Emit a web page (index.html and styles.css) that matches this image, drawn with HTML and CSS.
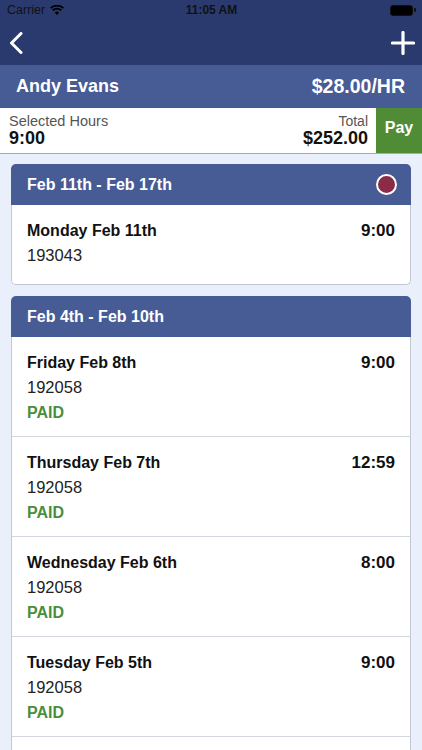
FILE: index.html
```html
<!DOCTYPE html>
<html lang="en">
<head>
<meta charset="UTF-8">
<meta name="viewport" content="width=device-width, initial-scale=1.0">
<link rel="stylesheet" href="styles.css">
<title>Andy Evans</title>
</head>
<body>

<div class="top">
  <!-- status bar -->
  <div class="status">
    <div class="status-left">
      <span>Carrier</span>
      <svg class="wifi" width="14" height="10" viewBox="0 0 14 10">
        <path d="M7 10 L4.7 7.6 A3.3 3.3 0 0 1 9.3 7.6 Z" fill="#000"/>
        <path d="M2.6 5.4 A6.3 6.3 0 0 1 11.4 5.4" fill="none" stroke="#000" stroke-width="1.8"/>
        <path d="M0.6 3.2 A9.3 9.3 0 0 1 13.4 3.2" fill="none" stroke="#000" stroke-width="1.8"/>
      </svg>
    </div>
    <div class="status-time">11:05 AM</div>
    <div class="status-right">
      <span class="battery"></span><span class="battery-nub"></span>
    </div>
  </div>

  <!-- nav bar -->
  <div class="nav">
    <svg width="14" height="22" viewBox="0 0 14 22">
      <path d="M12 1.5 L2.5 11 L12 20.5" fill="none" stroke="#fff" stroke-width="3" stroke-linecap="round" stroke-linejoin="round"/>
    </svg>
    <svg width="24" height="24" viewBox="0 0 24 24">
      <path d="M12 1.5 V22.5 M1.5 12 H22.5" stroke="#fff" stroke-width="3.2" stroke-linecap="round"/>
    </svg>
  </div>
</div>

<div class="namebar">
  <span>Andy Evans</span>
  <span class="rate">$28.00/HR</span>
</div>

<div class="summary">
  <div class="sum-col">
    <div class="sum-label">Selected Hours</div>
    <div class="sum-value">9:00</div>
  </div>
  <div class="sum-col sum-right">
    <div class="sum-label">Total</div>
    <div class="sum-value">$252.00</div>
  </div>
  <button class="pay">Pay</button>
</div>

<div class="list">

  <div class="card">
    <div class="card-head">
      <span>Feb 11th - Feb 17th</span>
      <span class="dot"></span>
    </div>
    <div class="card-body">
      <div class="row row-open">
        <div class="row-top"><span>Monday Feb 11th</span><span>9:00</span></div>
        <div class="job">193043</div>
      </div>
    </div>
  </div>

  <div class="card">
    <div class="card-head">
      <span>Feb 4th - Feb 10th</span>
    </div>
    <div class="card-body card-more">
      <div class="row">
        <div class="row-top"><span>Friday Feb 8th</span><span>9:00</span></div>
        <div class="job">192058</div>
        <div class="paid">PAID</div>
      </div>
      <div class="row">
        <div class="row-top"><span>Thursday Feb 7th</span><span>12:59</span></div>
        <div class="job">192058</div>
        <div class="paid">PAID</div>
      </div>
      <div class="row">
        <div class="row-top"><span>Wednesday Feb 6th</span><span>8:00</span></div>
        <div class="job">192058</div>
        <div class="paid">PAID</div>
      </div>
      <div class="row">
        <div class="row-top"><span>Tuesday Feb 5th</span><span>9:00</span></div>
        <div class="job">192058</div>
        <div class="paid">PAID</div>
      </div>
    </div>
  </div>

</div>

</body>
</html>
```

FILE: styles.css
```css
body { margin: 0; height: 750px; overflow: hidden; background: #e9effb; font-family: "Liberation Sans", Arial, sans-serif; color: #111; }

.top { background: #2a3a6e; height: 65px; }
.status { height: 20px; display: flex; align-items: center; justify-content: space-between; padding: 0 6px 0 7px; font-size: 12.5px; color: #111; }
.status-left { display: flex; align-items: center; gap: 5px; width: 120px; }
.status-time { font-weight: bold; font-size: 12px; }
.status-right { display: flex; align-items: center; justify-content: flex-end; width: 120px; }
.battery { width: 21px; height: 9px; background: #000; border: 1px solid #111; border-radius: 3px; }
.battery-nub { width: 2px; height: 4px; background: #111; border-radius: 0 1px 1px 0; margin-left: 1px; }
.nav { height: 45px; display: flex; align-items: center; justify-content: space-between; padding: 0 7px 0 9px; }

.namebar { height: 43px; background: #475b95; color: #fff; font-weight: bold; font-size: 18px; display: flex; align-items: center; justify-content: space-between; padding: 0 17px 0 16px; }
.namebar .rate { font-size: 19.5px; }

.summary { height: 45px; background: #fff; border-bottom: 1px solid #a9abb0; display: flex; }
.sum-col { flex: 1; padding: 4px 0 0 9px; }
.sum-right { text-align: right; padding: 4px 8px 0 0; }
.sum-label { font-size: 14.5px; line-height: 18px; color: #555; }
.sum-right .sum-label { font-size: 14px; }
.sum-value { font-size: 18px; line-height: 16px; font-weight: bold; }
.pay { width: 46px; border: none; background: #4f8c35; color: #fff; font: bold 16px "Liberation Sans", Arial, sans-serif; padding: 0 0 6px; }

.list { padding: 10px 11px; display: flex; flex-direction: column; gap: 11px; }
.card-head { height: 41px; background: #475b95; color: #fff; font-weight: bold; font-size: 16px; border-radius: 5px 5px 0 0; display: flex; align-items: center; justify-content: space-between; padding: 0 14px 0 16px; }
.dot { width: 17px; height: 17px; border: 2px solid #fff; border-radius: 50%; background: #8c2b47; }
.card-body { background: #fff; border: 1px solid #c3c7d1; border-top: none; border-radius: 0 0 5px 5px; }
.card-more { padding-bottom: 40px; }
.row { padding: 13px 15px 11px; border-bottom: 1px solid #d3d6de; line-height: 25px; font-size: 16px; }
.row-open { padding-bottom: 16px; border-bottom: none; }
.row-top { display: flex; justify-content: space-between; font-weight: bold; }
.row-top span:last-child { font-size: 17px; }
.job { color: #222; font-size: 16.5px; }
.paid { color: #4a8f3c; font-weight: bold; }
```
